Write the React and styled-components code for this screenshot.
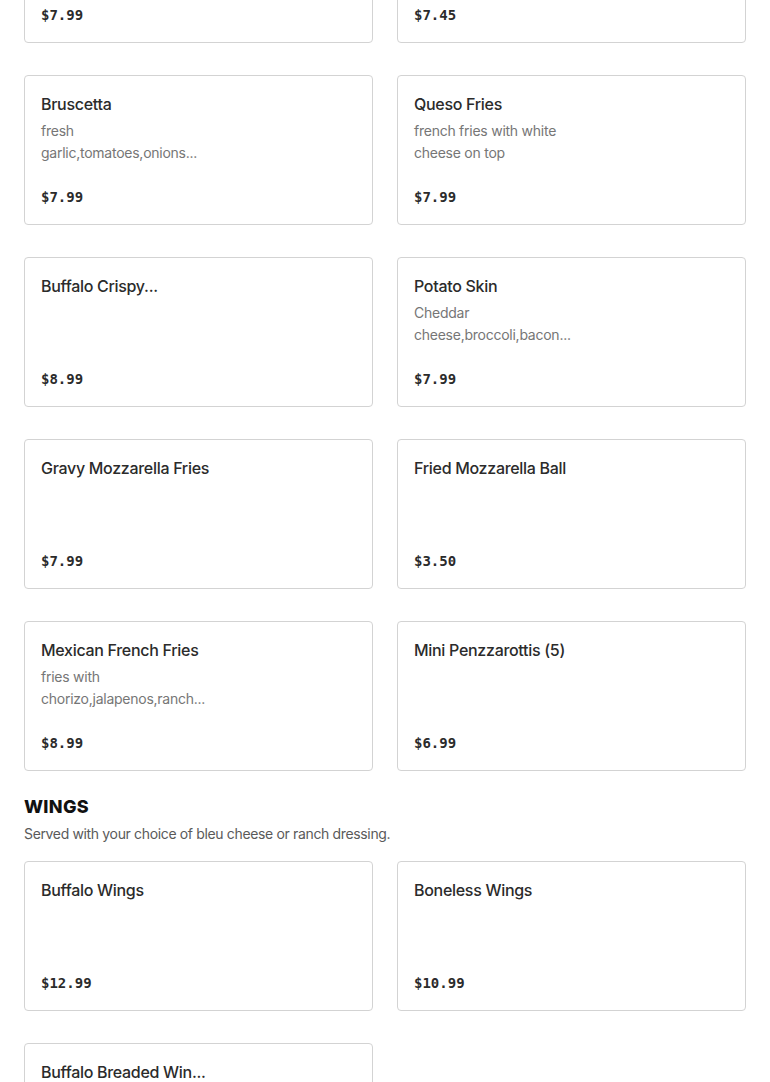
import React from 'react';
import styled, { createGlobalStyle } from 'styled-components';

const GlobalStyle = createGlobalStyle`
  html, body {
    margin: 0;
    padding: 0;
    background: #ffffff;
  }
  body {
    font-family: Inter, "Noto Sans", "Liberation Sans", sans-serif;
    color: #2b2b2b;
    overflow: hidden;
  }
`;

const Page = styled.div`
  padding: 0 24px 40px;
  /* the menu is scrolled part way through the appetizers */
  margin-top: -107px;
`;

const Section = styled.section`
  & + & {
    margin-top: 24px;
  }
`;

const SectionTitle = styled.h2`
  margin: 0;
  font-size: 18px;
  line-height: 24px;
  font-weight: 800;
  letter-spacing: 0.3px;
  color: #111111;
  text-transform: uppercase;
`;

const SectionNote = styled.p`
  margin: 4px 0 16px;
  font-size: 14px;
  line-height: 22px;
  letter-spacing: -0.35px;
  color: #5a5a5a;
`;

const Grid = styled.div`
  display: grid;
  grid-template-columns: 1fr 1fr;
  column-gap: 24px;
  row-gap: 32px;
`;

const Card = styled.div`
  box-sizing: border-box;
  height: 150px;
  padding: 16px;
  border: 1px solid #d3d3d3;
  border-radius: 4px;
  background: #fff;
  display: flex;
  flex-direction: column;
`;

const ItemName = styled.div`
  font-size: 16px;
  line-height: 24px;
  font-weight: 500;
  letter-spacing: -0.3px;
  color: #2b2b2b;
  white-space: nowrap;
`;

const ItemDesc = styled.div`
  margin-top: 4px;
  max-width: 176px;
  font-size: 14px;
  line-height: 22px;
  letter-spacing: -0.25px;
  color: #767676;
`;

const Price = styled.div`
  margin-top: auto;
  font-family: "DejaVu Sans Mono", "Liberation Mono", monospace;
  font-size: 14px;
  line-height: 22px;
  font-weight: 700;
  color: #2b2b2b;
`;

const appetizers = [
  { name: 'Mozzarella Sticks', price: '$7.99' },
  { name: 'Onion Rings', price: '$7.45' },
  { name: 'Bruscetta', desc: 'fresh garlic,tomatoes,onions...', price: '$7.99' },
  { name: 'Queso Fries', desc: 'french fries with white cheese on top', price: '$7.99' },
  { name: 'Buffalo Crispy...', price: '$8.99' },
  { name: 'Potato Skin', desc: 'Cheddar cheese,broccoli,bacon...', price: '$7.99' },
  { name: 'Gravy Mozzarella Fries', price: '$7.99' },
  { name: 'Fried Mozzarella Ball', price: '$3.50' },
  { name: 'Mexican French Fries', desc: 'fries with chorizo,jalapenos,ranch...', price: '$8.99' },
  { name: 'Mini Penzzarottis (5)', price: '$6.99' },
];

const wings = [
  { name: 'Buffalo Wings', price: '$12.99' },
  { name: 'Boneless Wings', price: '$10.99' },
  { name: 'Buffalo Breaded Win...', price: '$12.99' },
];

const MenuCard = ({ item }) => (
  <Card>
    <ItemName>{item.name}</ItemName>
    {item.desc && <ItemDesc>{item.desc}</ItemDesc>}
    <Price>{item.price}</Price>
  </Card>
);

const App = () => (
  <>
    <GlobalStyle />
    <Page>
      <Section>
        <Grid>
          {appetizers.map((item, i) => (
            <MenuCard key={i} item={item} />
          ))}
        </Grid>
      </Section>
      <Section>
        <SectionTitle>Wings</SectionTitle>
        <SectionNote>Served with your choice of bleu cheese or ranch dressing.</SectionNote>
        <Grid>
          {wings.map((item, i) => (
            <MenuCard key={i} item={item} />
          ))}
        </Grid>
      </Section>
    </Page>
  </>
);

export default App;
